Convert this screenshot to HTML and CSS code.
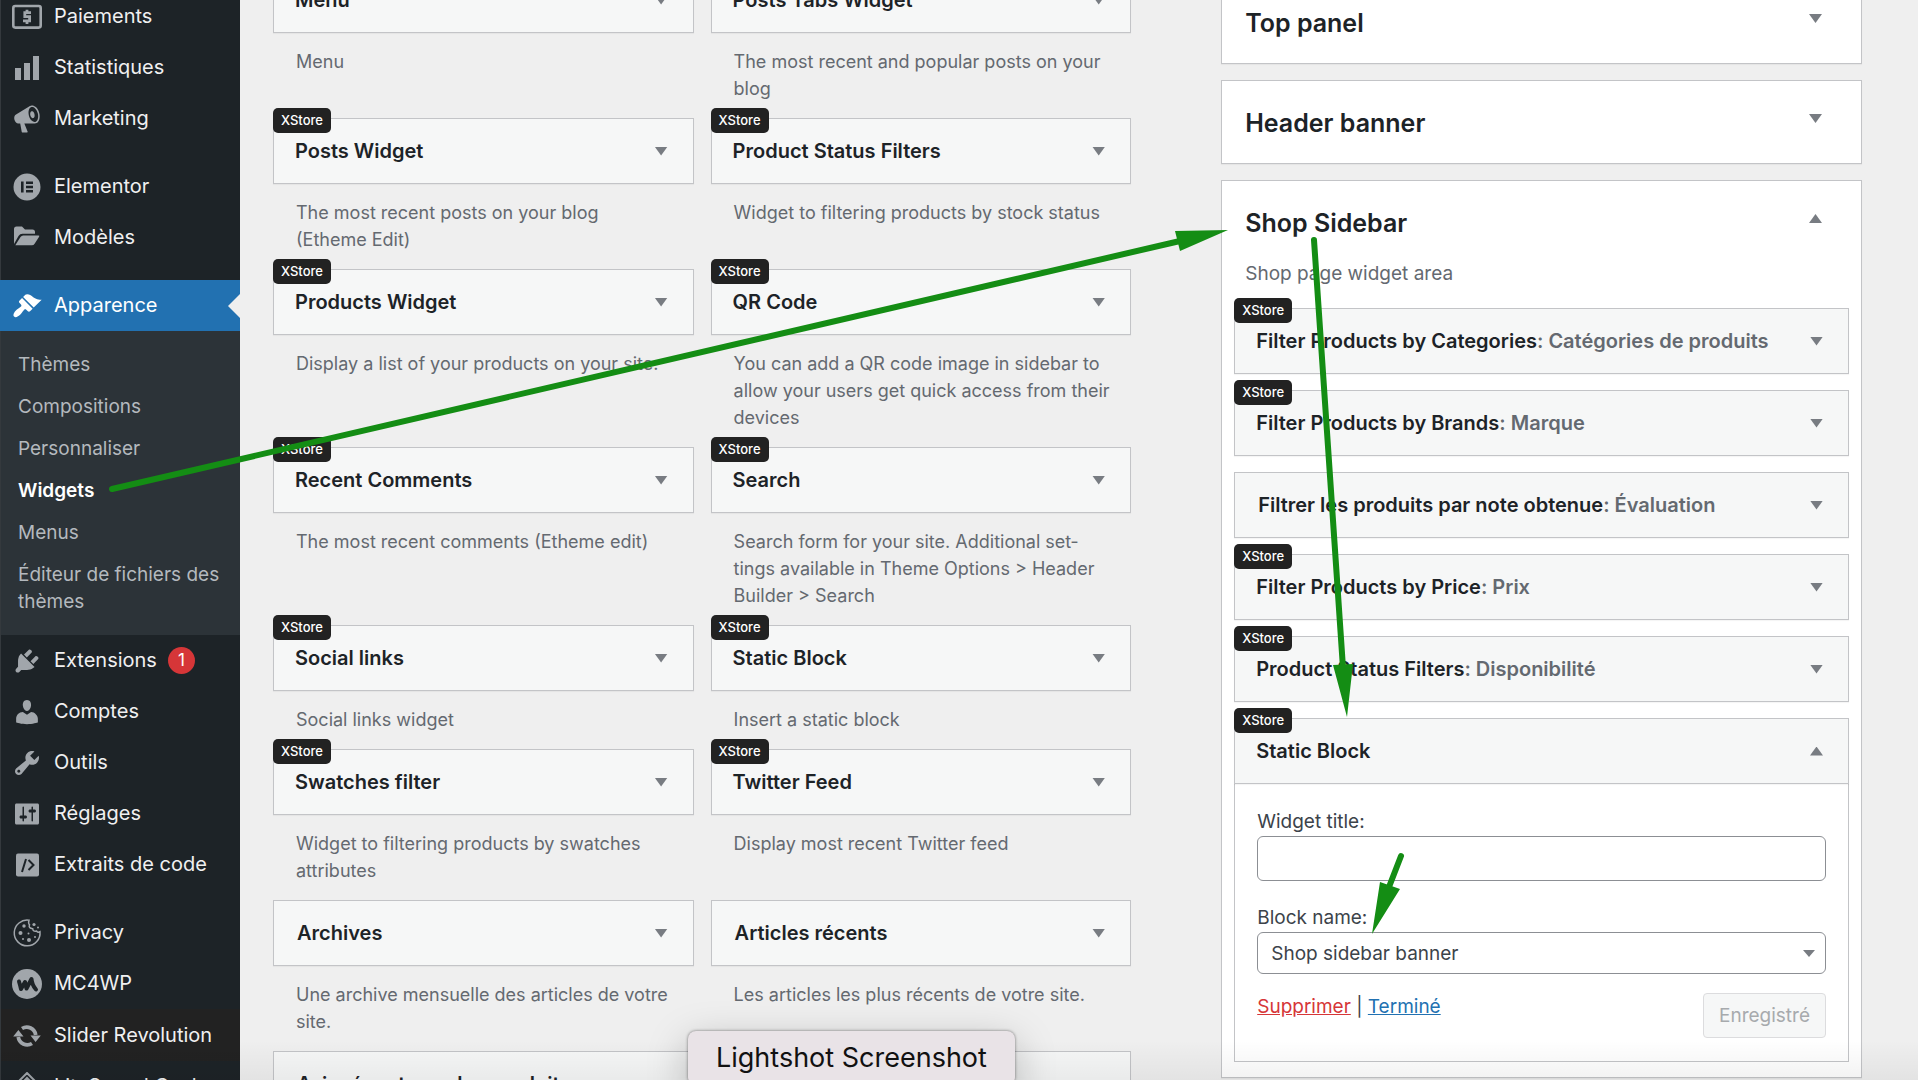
FILE: index.html
```
<!DOCTYPE html>
<html lang="fr">
    <head>
        <meta charset="UTF-8">
        <title>Widgets</title>
        <meta content="width=device-width" name="viewport">
        <link rel="stylesheet" href="styles.css">
    </head>
    <body>
        <div class="admin">
            <nav class="menu">
                <ul>
                    <li><a href="#">
                        <svg class="icon" viewBox="0 0 30 30">
                            <rect x="1.3" y="4" width="27.4" height="21.6" rx="2" fill="none" stroke="currentColor" stroke-width="2.6"/>
                            <path d="M19 10.7h-6.2v4h4.8v4.2H11M15 7.7v3M15 19v3" fill="none" stroke="currentColor" stroke-width="2.8"/>
                        </svg>Paiements</a></li>
                    <li><a href="#">
                        <svg class="icon" viewBox="0 0 30 30">
                            <path d="M3 15h6v12H3zM12 10h6v17h-6zM21 3h6v24h-6z"/>
                        </svg>Statistiques</a></li>
                    <li><a href="#">
                        <svg class="icon" viewBox="0 0 20 20">
                            <path d="M18.15 5.94c.46 1.62.38 3.22-.02 4.48-.42 1.28-1.26 2.18-2.3 2.48-.16.06-.26.06-.4.06-.06.02-.12.02-.18.02-.06.02-.14.02-.22.02h-6.8l2.22 5.5c.02.14-.06.26-.14.34-.08.1-.24.16-.34.16H6.95c-.1 0-.26-.06-.34-.16-.08-.08-.16-.2-.14-.34l-1-5.5H4.25l-.02-.02c-.5.06-1.08-.18-1.54-.62s-.88-1.08-1.06-1.88c-.24-.8-.2-1.56-.02-2.2.18-.62.58-1.08 1.06-1.3l.02-.02 9-5.4c.1-.06.18-.1.24-.16.06-.04.14-.08.24-.12.16-.08.28-.12.5-.18 1.04-.3 2.24.1 3.22.98s1.84 2.24 2.26 3.86zm-2.58 5.98h-.02c.4-.1.74-.34 1.04-.7.58-.7.86-1.76.86-3.04 0-.64-.1-1.3-.28-1.98-.34-1.36-1.02-2.5-1.78-3.24s-1.68-1.1-2.46-.88c-.82.22-1.4.96-1.7 2-.32 1.04-.28 2.36.06 3.72.38 1.36 1 2.5 1.8 3.24.78.74 1.62 1.1 2.48.88zm-2.54-7.08c.22-.04.42-.02.62.04.38.16.76.48 1.02 1s.42 1.2.42 1.78c0 .3-.04.56-.12.8-.18.48-.44.84-.86.94-.34.1-.8-.06-1.14-.4s-.64-.86-.78-1.5c-.18-.62-.12-1.24.02-1.72s.48-.84.82-.94z"/>
                        </svg>Marketing</a></li>
                    <li class="spaced"><a href="#">
                        <svg class="icon" viewBox="0 0 30 30">
                            <path fill-rule="evenodd" d="M15 1.5a13.5 13.5 0 1 0 0 27a13.5 13.5 0 0 0 0-27zM9 9.5h2.6v11H9zM14 9.5h7v2.4h-7zM14 13.8h7v2.4h-7zM14 18.1h7v2.4h-7z"/>
                        </svg>Elementor</a></li>
                    <li><a href="#">
                        <svg class="icon" viewBox="0 0 30 30">
                            <path d="M2 21V6q0-2.5 2.5-2.5H10l3 3h7.5q2.5 0 2.5 2.5v1.7H10.5q-2.6 0-4 2.2zM3.3 22.3l5.2-8.3q1-1.5 2.7-1.5H26.5q1.3 0 .6 1.3l-4.5 7q-1 1.5-2.7 1.5z"/>
                        </svg>Modèles</a></li>
                    <li class="spaced current"><a href="#">
                        <svg class="icon" viewBox="0 0 20 20">
                            <path d="M14.48 11.06L7.41 3.99l1.5-1.5c.5-.56 2.3-.47 3.51.32 1.21.8 1.43 1.28 2.91 2.1 1.18.64 2.45 1.26 4.45.85zm-.71.71L6.7 4.7 4.93 6.47c-.39.39-.39 1.02 0 1.41l1.06 1.06c.39.39.39 1.03 0 1.42-.6.6-1.43 1.11-2.21 1.69-.35.26-.7.53-1.01.84C1.43 14.23.4 16.08 1.4 17.07c.99 1 2.84-.03 4.18-1.36.31-.31.58-.66.85-1.02.57-.78 1.08-1.61 1.69-2.21.39-.39 1.02-.39 1.41 0l1.06 1.06c.39.39 1.02.39 1.41 0z"/>
                        </svg>Apparence</a>
                        <ul class="submenu">
                            <li><a href="#">Thèmes</a></li>
                            <li><a href="#">Compositions</a></li>
                            <li><a href="#">Personnaliser</a></li>
                            <li><a href="#" class="on">Widgets</a></li>
                            <li><a href="#">Menus</a></li>
                            <li><a href="#">Éditeur de fichiers des thèmes</a></li>
                        </ul>
                    </li>
                    <li><a href="#">
                        <svg class="icon" viewBox="0 0 20 20">
                            <path d="M13.11 4.36L9.87 7.6 8 5.73l3.24-3.24c.35-.34 1.05-.2 1.56.32.52.51.66 1.21.31 1.55zm-8 1.77l.91-1.12 9.01 9.01-1.19.84c-.71.71-2.63 1.16-3.82 1.16H6.14L4.9 17.26c-.59.59-1.54.59-2.12 0-.59-.58-.59-1.53 0-2.12l1.24-1.24v-3.88c0-1.13.4-3.19 1.09-3.89zm7.26 3.97l3.24-3.24c.34-.35 1.04-.21 1.55.31.52.51.66 1.21.31 1.55l-3.24 3.25z"/>
                        </svg>Extensions <span class="count">1</span></a></li>
                    <li><a href="#">
                        <svg class="icon" viewBox="0 0 20 20">
                            <path d="M10 9.25c-2.27 0-2.73-3.44-2.73-3.44C7 4.02 7.82 2 9.97 2c2.16 0 2.98 2.02 2.71 3.81 0 0-.41 3.44-2.68 3.44zm0 2.57L12.72 10c2.39 0 4.52 2.33 4.52 4.53v2.49s-3.65 1.13-7.24 1.13c-3.65 0-7.24-1.13-7.24-1.13v-2.49c0-2.25 1.94-4.48 4.47-4.48z"/>
                        </svg>Comptes</a></li>
                    <li><a href="#">
                        <svg class="icon" viewBox="0 0 20 20">
                            <path d="M16.68 9.77c-1.34 1.34-3.3 1.67-4.95.99l-5.41 6.52c-.99.99-2.59.99-3.58 0s-.99-2.59 0-3.57l6.52-5.42c-.68-1.65-.35-3.61.99-4.95 1.28-1.28 3.12-1.62 4.72-1.06l-2.89 2.89 2.82 2.82 2.86-2.87c.53 1.58.18 3.39-1.08 4.65zM3.81 16.21c.4.39 1.04.39 1.43 0 .4-.4.4-1.04 0-1.43-.39-.4-1.03-.4-1.43 0-.39.39-.39 1.03 0 1.43z"/>
                        </svg>Outils</a></li>
                    <li><a href="#">
                        <svg class="icon" viewBox="0 0 20 20">
                            <path d="M18 16V4c0-.55-.45-1-1-1H3c-.55 0-1 .45-1 1v12c0 .55.45 1 1 1h14c.55 0 1-.45 1-1zM8 11h1c.55 0 1 .45 1 1s-.45 1-1 1H8v1.5c0 .28-.22.5-.5.5s-.5-.22-.5-.5V13H6c-.55 0-1-.45-1-1s.45-1 1-1h1V5.5c0-.28.22-.5.5-.5s.5.22.5.5V11zm5-2h-1c-.55 0-1-.45-1-1s.45-1 1-1h1V5.5c0-.28.22-.5.5-.5s.5.22.5.5V7h1c.55 0 1 .45 1 1s-.45 1-1 1h-1v5.5c0 .28-.22.5-.5.5s-.5-.22-.5-.5V9z"/>
                        </svg>Réglages</a></li>
                    <li><a href="#">
                        <svg class="icon" viewBox="0 0 30 30">
                            <rect x="4" y="3.5" width="23" height="23" rx="2"/>
                            <path d="M14 9l-4 13M16.5 10l5 5-5 5" fill="none" stroke="#1d2327" stroke-width="2"/>
                        </svg>Extraits de code</a></li>
                    <li class="spaced"><a href="#">
                        <svg class="icon" viewBox="0 0 30 30">
                            <path d="M17 2.2a12.9 12.9 0 1 0 11 11.5q-2 1.3-3.5-.7q-3.5 1-3.8-2.3q-4.5-.5-3.2-4q-1.5-1.5-.5-4.5z" fill="none" stroke="currentColor" stroke-width="1.5"/>
                            <circle cx="12" cy="8" r="1.7"/>
                            <circle cx="8.5" cy="15" r="2"/>
                            <circle cx="17" cy="22" r="2"/>
                            <circle cx="22" cy="6.5" r="1.6"/>
                            <circle cx="16.5" cy="15.5" r="1"/>
                            <circle cx="11" cy="21" r="1"/>
                            <circle cx="23" cy="19" r="1"/>
                            <circle cx="26" cy="9.5" r="1"/>
                        </svg>Privacy</a></li>
                    <li><a href="#">
                        <svg class="icon" viewBox="0 0 30 30">
                            <circle cx="15" cy="15" r="15"/>
                            <path d="M7 12.5q1.5 5 2 7.5l4-7 1.5 6.5L19.5 10q.5 6 4.5 10.5" fill="none" stroke="#1d2327" stroke-width="4" stroke-linecap="round" stroke-linejoin="round"/>
                        </svg>MC4WP</a></li>
                    <li class="dark"><a href="#">
                        <svg class="icon" viewBox="0 0 30 30">
                            <path d="M10 7.5A9 9 0 0 1 23.7 14M20 22.5A9 9 0 0 1 6.3 16" fill="none" stroke="currentColor" stroke-width="3.8"/>
                            <path d="M18.5 14.5h10.3L23.6 21zM11.5 15.5H1.2L6.4 9z"/>
                        </svg>Slider Revolution</a></li>
                    <li><a href="#">
                        <svg class="icon" viewBox="0 0 30 30">
                            <path d="M15 1l14 14-14 14L1 15zM15 6l9 9-9 9-9-9z" fill="none" stroke="currentColor" stroke-width="2"/>
                            <path d="M15 8l5 6-5 6-5-6z"/>
                        </svg>LiteSpeed Cache</a></li>
                </ul>
            </nav>
            <main>
                <section class="available">
                    <article>
                        <div class="widget xstore"><h3>Menu</h3><button class="toggle" aria-label="Menu"></button></div>
                        <p>Menu</p>
                    </article>
                    <article>
                        <div class="widget xstore"><h3>Posts Tabs Widget</h3><button class="toggle" aria-label="Posts Tabs Widget"></button></div>
                        <p>The most recent and popular posts on your blog</p>
                    </article>
                    <article>
                        <div class="widget xstore"><span class="badge">XStore</span><h3>Posts Widget</h3><button class="toggle" aria-label="Posts Widget"></button></div>
                        <p>The most recent posts on your blog (Etheme&nbsp;Edit)</p>
                    </article>
                    <article>
                        <div class="widget xstore"><span class="badge">XStore</span><h3>Product Status Filters</h3><button class="toggle" aria-label="Product Status Filters"></button></div>
                        <p>Widget to filtering products by stock status</p>
                    </article>
                    <article>
                        <div class="widget xstore"><span class="badge">XStore</span><h3>Products Widget</h3><button class="toggle" aria-label="Products Widget"></button></div>
                        <p>Display a list of your products on your site.</p>
                    </article>
                    <article>
                        <div class="widget xstore"><span class="badge">XStore</span><h3>QR Code</h3><button class="toggle" aria-label="QR Code"></button></div>
                        <p>You can add a QR code image in sidebar to allow your users get quick access from their devices</p>
                    </article>
                    <article>
                        <div class="widget xstore"><span class="badge">XStore</span><h3>Recent Comments</h3><button class="toggle" aria-label="Recent Comments"></button></div>
                        <p>The most recent comments (Etheme edit)</p>
                    </article>
                    <article>
                        <div class="widget xstore"><span class="badge">XStore</span><h3>Search</h3><button class="toggle" aria-label="Search"></button></div>
                        <p>Search form for your site. Additional set&shy;tings available in Theme Options &gt; Header Builder &gt; Search</p>
                    </article>
                    <article>
                        <div class="widget xstore"><span class="badge">XStore</span><h3>Social links</h3><button class="toggle" aria-label="Social links"></button></div>
                        <p>Social links widget</p>
                    </article>
                    <article>
                        <div class="widget xstore"><span class="badge">XStore</span><h3>Static Block</h3><button class="toggle" aria-label="Static Block"></button></div>
                        <p>Insert a static block</p>
                    </article>
                    <article>
                        <div class="widget xstore"><span class="badge">XStore</span><h3>Swatches filter</h3><button class="toggle" aria-label="Swatches filter"></button></div>
                        <p>Widget to filtering products by swatches attributes</p>
                    </article>
                    <article>
                        <div class="widget xstore"><span class="badge">XStore</span><h3>Twitter Feed</h3><button class="toggle" aria-label="Twitter Feed"></button></div>
                        <p>Display most recent Twitter feed</p>
                    </article>
                    <article>
                        <div class="widget"><h3>Archives</h3><button class="toggle" aria-label="Archives"></button></div>
                        <p>Une archive mensuelle des articles de votre site.</p>
                    </article>
                    <article>
                        <div class="widget"><h3>Articles récents</h3><button class="toggle" aria-label="Articles récents"></button></div>
                        <p>Les articles les plus récents de votre site.</p>
                    </article>
                    <article>
                        <div class="widget"><h3>Avis récents sur les produits</h3><button class="toggle" aria-label="Avis récents sur les produits"></button></div>
                    </article>
                    <article>
                        <div class="widget"><h3>Calendrier</h3><button class="toggle" aria-label="Calendrier"></button></div>
                    </article>
                </section>
                <section class="areas">
                    <div class="area">
                        <header><h2>Top panel</h2><button class="toggle" aria-label="Top panel"></button></header>
                    </div>
                    <div class="area">
                        <header><h2>Header banner</h2><button class="toggle" aria-label="Header banner"></button></header>
                    </div>
                    <div class="area open">
                        <header><h2>Shop Sidebar</h2><button class="toggle up" aria-label="Shop Sidebar"></button></header>
                        <p class="about">Shop page widget area</p>
                        <div class="placed">
                            <div class="widget xstore"><span class="badge">XStore</span><h3>Filter Products by Categories<span>: Catégories de produits</span></h3><button class="toggle" aria-label="Catégories de produits"></button></div>
                            <div class="widget xstore"><span class="badge">XStore</span><h3>Filter Products by Brands<span>: Marque</span></h3><button class="toggle" aria-label="Marque"></button></div>
                            <div class="widget"><h3>Filtrer les produits par note obtenue<span>: Évaluation</span></h3><button class="toggle" aria-label="Évaluation"></button></div>
                            <div class="widget xstore"><span class="badge">XStore</span><h3>Filter Products by Price<span>: Prix</span></h3><button class="toggle" aria-label="Prix"></button></div>
                            <div class="widget xstore"><span class="badge">XStore</span><h3>Product Status Filters<span>: Disponibilité</span></h3><button class="toggle" aria-label="Disponibilité"></button></div>
                            <div>
                                <div class="widget xstore"><span class="badge">XStore</span><h3>Static Block</h3><button class="toggle up" aria-label="Static Block"></button></div>
                                <form>
                                    <label for="title">Widget title:</label>
                                    <input id="title" type="text">
                                    <label for="block">Block name:</label>
                                    <div class="select">
                                        <select id="block">
                                            <option>Shop sidebar banner</option>
                                        </select>
                                    </div>
                                    <div class="actions">
                                        <div><a class="delete" href="#">Supprimer</a> | <a href="#">Terminé</a></div>
                                        <button type="submit" disabled>Enregistré</button>
                                    </div>
                                </form>
                            </div>
                        </div>
                    </div>
                </section>
            </main>
            <svg class="arrows" width="1918" height="1080" viewBox="0 0 1918 1080">
                <path d="M112 489L1180 241M1314 240L1343 668M1401 856L1389 887"/>
                <path class="head" d="M1228 230L1175 231L1180 251zM1347 717L1333 665L1353 664zM1372 934L1380 882L1400 889z"/>
            </svg>
            <div class="tooltip">Lightshot Screenshot</div>
        </div>
    </body>
</html>
```
FILE: styles.css
```
* {
    box-sizing: border-box;
    padding: 0;
    margin: 0
}

body {
    background: #efefef;
    color: #3c434a;
    font: 19px/27px Inter, "Liberation Sans", sans-serif
}

ul {
    list-style: none
}

.admin {
    position: relative;
    display: flex;
    height: 100vh;
    overflow: hidden
}

/* the page is scrolled down a bit, so each column starts above the window */

.menu {
    flex: 0 0 240px;
    background: #1d2327;
    border-left: 1px solid #34393d
}

.menu > ul {
    margin-top: -9px
}

.menu a {
    display: flex;
    align-items: center;
    height: 51px;
    padding-left: 11px;
    font-size: 20px;
    color: #f0f0f1;
    text-decoration: none;
    white-space: nowrap
}

.icon {
    flex: none;
    width: 30px;
    height: 30px;
    margin-right: 12px;
    color: #a1a6ab;
    fill: currentColor
}

.spaced {
    margin-top: 17px
}

.dark {
    padding-top: 1px;
    background: #222
}

.current > a {
    position: relative;
    margin-left: -1px;
    padding-left: 12px;
    background: #2271b1;
    color: #fff
}

.current > a::after {
    content: "";
    position: absolute;
    right: 0;
    border: 12px solid transparent;
    border-left: 0;
    border-right-color: #efefef
}

.current .icon {
    color: #fff
}

.submenu {
    padding: 12px 0 13px;
    background: #2c3338
}

.menu .submenu a {
    display: block;
    height: auto;
    padding: 8px 10px 7px 17px;
    font-size: 19px;
    color: #b4b9be;
    white-space: normal
}

.menu .submenu .on {
    font-weight: 600;
    color: #fff
}

.count {
    width: 27px;
    margin-left: 11px;
    border-radius: 50%;
    background: #d63638;
    color: #fff;
    font-size: 17px;
    text-align: center
}

main {
    flex: 1;
    display: grid;
    grid-template-columns: 75fr 56fr;
    align-items: start;
    gap: 90px;
    padding: 0 56px 0 33px
}

.available {
    display: grid;
    grid-template-columns: 1fr 1fr;
    column-gap: 17px;
    margin-top: -33px
}

.available p {
    padding: 15px 21px 16px 23px;
    font-size: 18px;
    color: #646970
}

.widget {
    position: relative;
    display: flex;
    align-items: center;
    justify-content: space-between;
    height: 66px;
    padding: 0 25px 0 23px;
    border: 1px solid #c3c4c7;
    background: #f6f7f7;
    box-shadow: 0 1px 1px rgba(0,0,0,.04)
}

.widget.xstore {
    padding-left: 21px
}

h3 {
    font-size: 20px;
    font-weight: 600;
    color: #1d2327
}

h3 span {
    color: #646970
}

.badge {
    position: absolute;
    top: -11px;
    left: -1px;
    padding: 0 8px;
    border-radius: 5px;
    background: #222;
    color: #fff;
    font-size: 13px;
    font-weight: 500;
    line-height: 25px
}

.toggle {
    width: 13px;
    height: 9px;
    border: 0;
    background: #787c82;
    clip-path: polygon(0 0, 100% 0, 50% 100%)
}

.toggle.up {
    clip-path: polygon(50% 0, 100% 100%, 0 100%)
}

.areas {
    display: grid;
    gap: 16px;
    margin-top: -20px
}

.area {
    padding: 0 12px 3px;
    border: 1px solid #c3c4c7;
    background: #fff;
    box-shadow: 0 1px 1px rgba(0,0,0,.04)
}

.area.open {
    padding-bottom: 15px
}

.area header {
    display: flex;
    justify-content: space-between;
    padding: 27px 27px 22px 11px
}

.area header .toggle {
    margin-top: 6px
}

h2 {
    font-size: 25px;
    font-weight: 600;
    line-height: 30px;
    color: #1d2327
}

.about {
    margin: 0 11px 21px;
    color: #646970
}

.placed {
    display: grid;
    gap: 16px
}

form {
    padding: 24px 22px 23px;
    border: 1px solid #c3c4c7;
    border-top: 0
}

label {
    display: block
}

input,
select {
    display: block;
    width: 100%;
    height: 45px;
    padding: 0 13px;
    margin: 1px 0 23px;
    border: 1px solid #8c8f94;
    border-radius: 6px;
    background: #fff;
    color: #3c434a;
    font: inherit
}

.select {
    position: relative
}

select {
    height: 42px;
    margin-bottom: 19px;
    appearance: none
}

.select::after {
    content: "";
    position: absolute;
    top: 18px;
    right: 11px;
    border: 6px solid transparent;
    border-top: 7px solid #787c82;
    border-bottom: 0
}

.actions {
    display: flex;
    justify-content: space-between;
    align-items: flex-start
}

.actions a {
    color: #2271b1
}

.actions .delete {
    color: #d63638
}

.actions button {
    height: 45px;
    padding: 0 15px;
    border: 1px solid #dcdcde;
    border-radius: 4px;
    background: #f6f7f7;
    color: #a7aaad;
    font: inherit
}

.arrows {
    position: absolute;
    top: 0;
    left: 0;
    fill: none;
    stroke: #148d14;
    stroke-width: 6;
    stroke-linecap: round;
    pointer-events: none
}

.arrows .head {
    fill: #148d14;
    stroke: none
}

.admin::after {
    content: "";
    position: absolute;
    right: 0;
    bottom: 0;
    left: 0;
    height: 40px;
    background: linear-gradient(transparent, rgba(0,0,0,.05));
    pointer-events: none
}

.tooltip {
    position: absolute;
    z-index: 1;
    bottom: -5px;
    left: 688px;
    padding: 0 28px;
    border-radius: 8px;
    background: #e9e3e7;
    box-shadow: 0 0 3px rgba(0,0,0,.5), 0 12px 40px rgba(0,0,0,.25);
    color: #111;
    font-size: 27px;
    line-height: 54px
}
```
